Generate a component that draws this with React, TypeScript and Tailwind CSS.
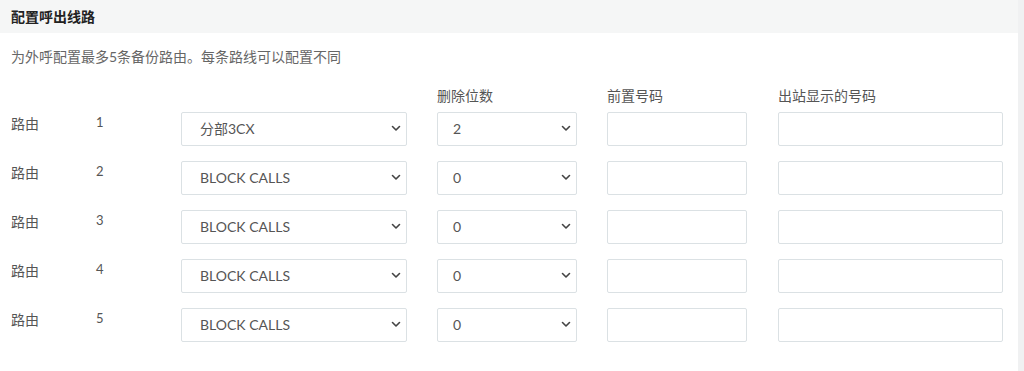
import React from "react";

const routes = [
  { n: 1, trunk: "分部3CX", strip: "2" },
  { n: 2, trunk: "BLOCK CALLS", strip: "0" },
  { n: 3, trunk: "BLOCK CALLS", strip: "0" },
  { n: 4, trunk: "BLOCK CALLS", strip: "0" },
  { n: 5, trunk: "BLOCK CALLS", strip: "0" },
];

const Chevron = () => (
  <svg width="10" height="7" viewBox="0 0 10 7" fill="none" className="shrink-0">
    <path d="M1.5 1.5 L5 5 L8.5 1.5" stroke="#444" strokeWidth="1.6" strokeLinecap="round" strokeLinejoin="round" />
  </svg>
);

const FakeSelect = ({ value, width, pad }: { value: string; width: string; pad: string }) => (
  <div
    className={`${width} ${pad} h-[34px] flex items-center justify-between pr-[5px] pb-[2px] border border-[#dbe1e4] rounded-[2px] bg-white text-[14px] text-[#555]`}
  >
    <span>{value}</span>
    <Chevron />
  </div>
);

export default function App() {
  return (
    <div
      className="w-[1024px] h-[371px] flex bg-white overflow-hidden"
      style={{ fontFamily: '"Lato", "Noto Sans CJK SC", sans-serif' }}
    >
      <div className="flex-1 flex flex-col">
        {/* Header */}
        <div className="h-[33px] bg-[#f5f6f6] flex items-center pl-[11px]">
          <span className="text-[14px] font-bold text-[#222]">配置呼出线路</span>
        </div>

        {/* Description */}
        <p className="mt-[14px] pl-[11px] text-[14px] leading-[20px] text-[#666]">
          为外呼配置最多5条备份路由。每条路线可以配置不同
        </p>

        {/* Column headers */}
        <div className="mt-[19px] flex pl-[437px] text-[14px] leading-[20px] text-[#555]">
          <span className="w-[170px]">删除位数</span>
          <span className="w-[171px]">前置号码</span>
          <span>出站显示的号码</span>
        </div>

        {/* Rows */}
        <div className="mt-[6px] flex flex-col gap-[15px]">
          {routes.map((r) => (
            <div key={r.n} className="flex pl-[11px]">
              <span className="w-[85px] pt-[2px] text-[14px] leading-[20px] text-[#555]">路由</span>
              <span className="w-[85px] pt-[1px] text-[13px] leading-[18px] text-[#555]">{r.n}</span>
              <FakeSelect value={r.trunk} width="w-[226px]" pad="pl-[18px]" />
              <div className="w-[30px]" />
              <FakeSelect value={r.strip} width="w-[140px]" pad="pl-[15px]" />
              <div className="w-[30px]" />
              <div className="w-[140px] h-[34px] border border-[#dbe1e4] rounded-[2px] bg-white" />
              <div className="w-[31px]" />
              <div className="w-[225px] h-[34px] border border-[#dbe1e4] rounded-[2px] bg-white" />
            </div>
          ))}
        </div>
      </div>
      <div className="w-[6px] bg-[#f0f1f2]" />
    </div>
  );
}
